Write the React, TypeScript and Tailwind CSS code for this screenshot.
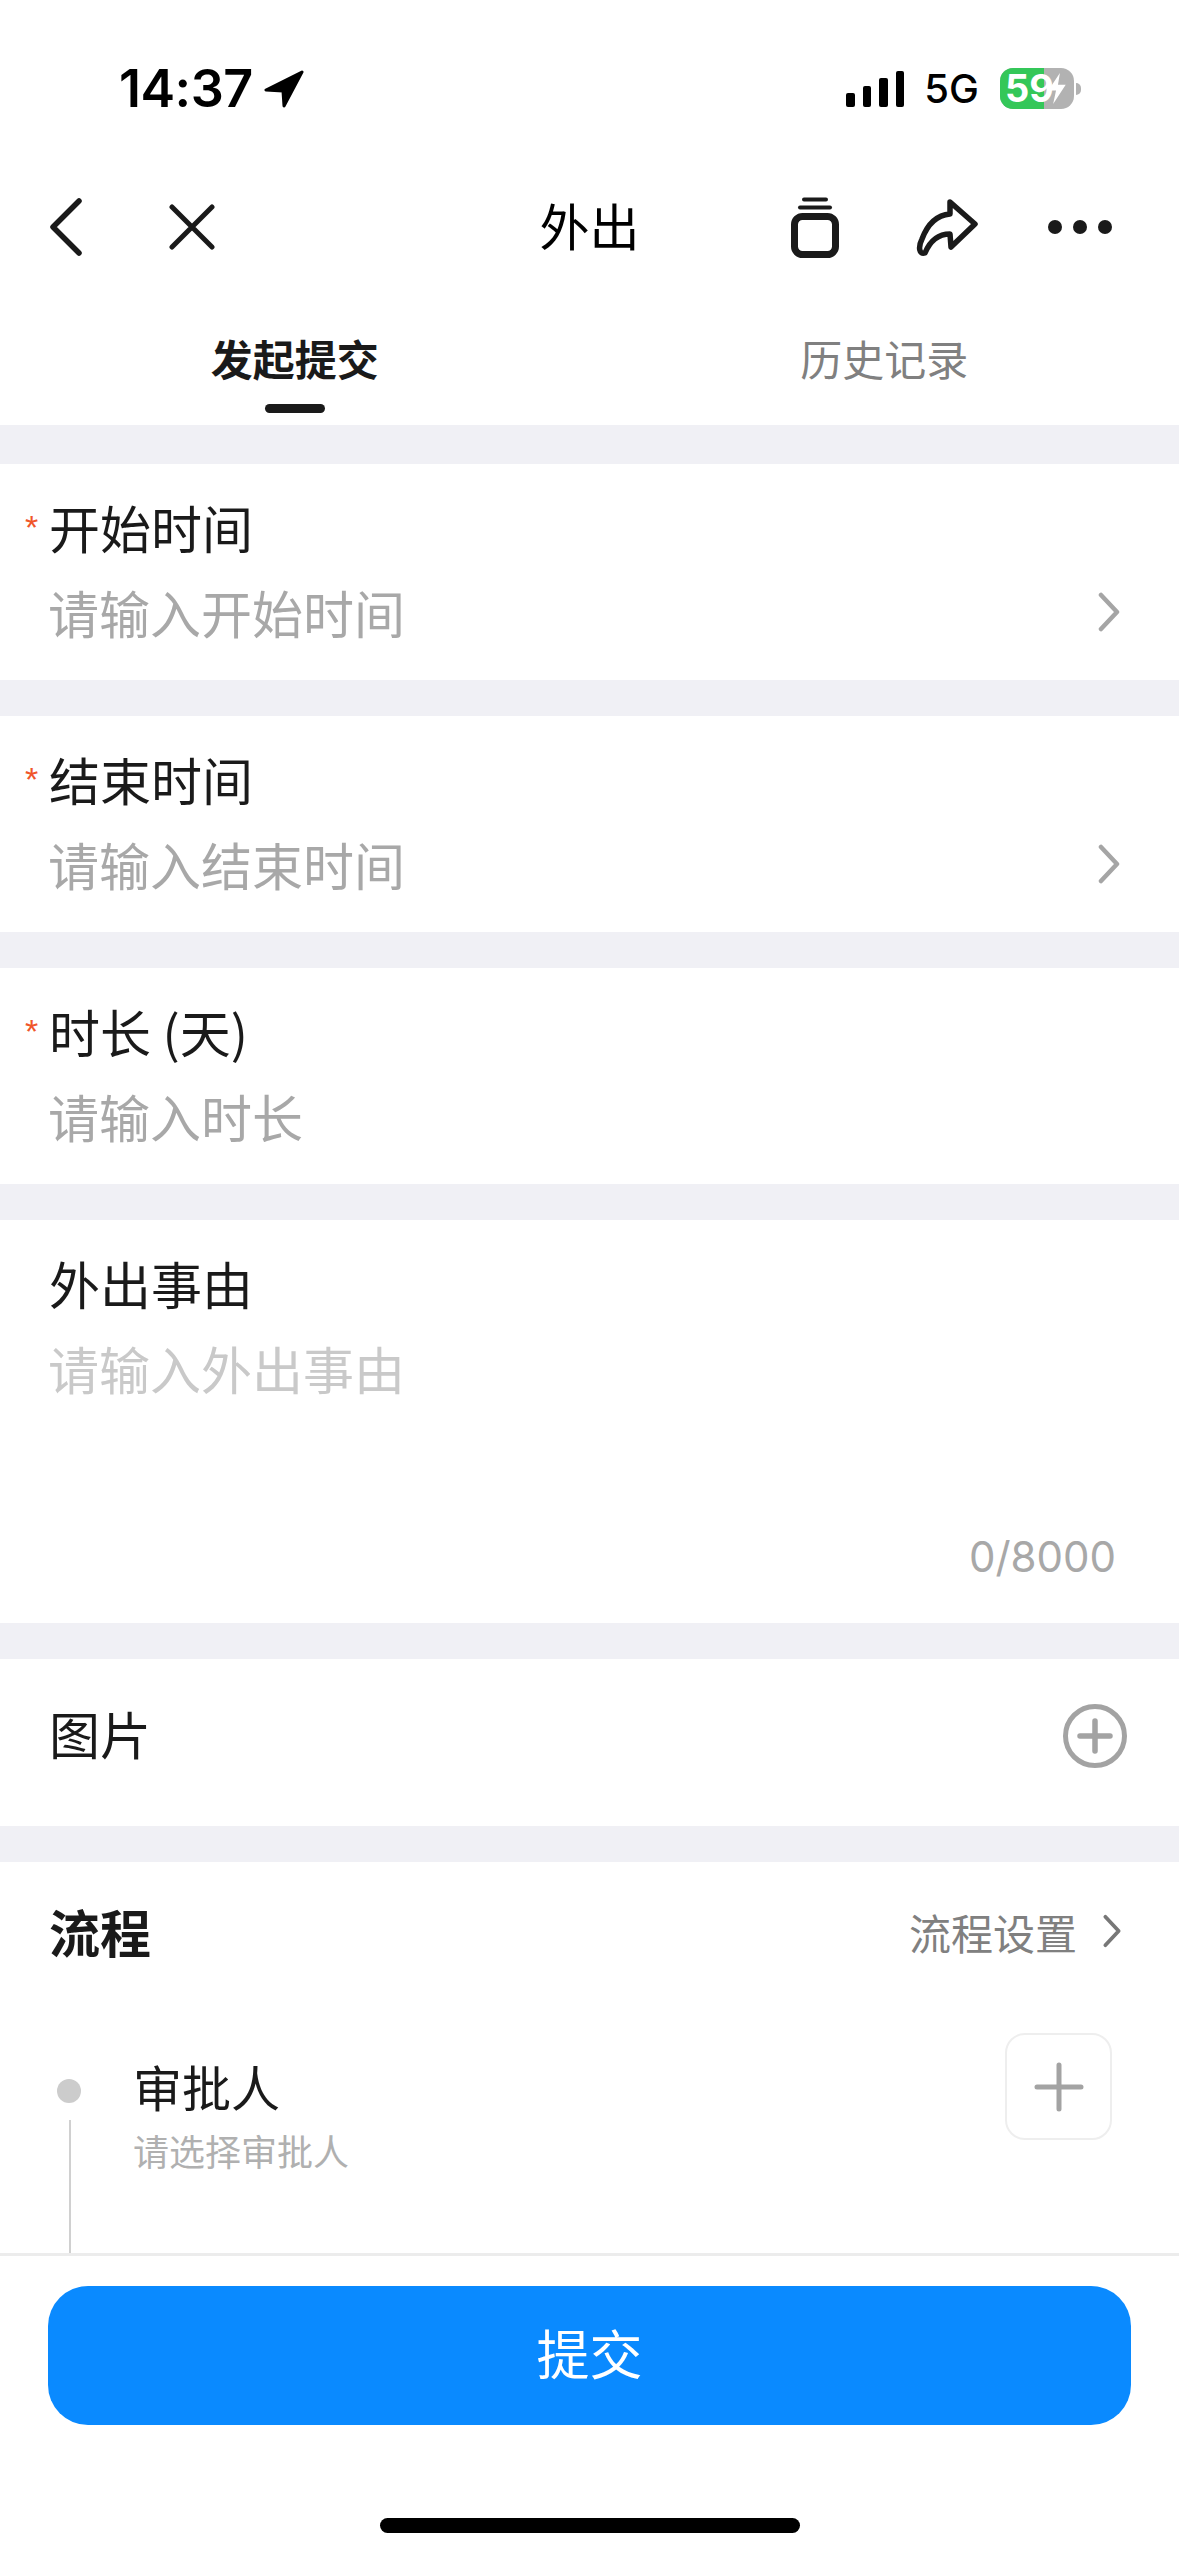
function Chevron({ className = "" }: { className?: string }) {
  return (
    <svg viewBox="0 0 24 40" className={className} fill="none" stroke="currentColor" strokeWidth="4.5" strokeLinecap="round" strokeLinejoin="round">
      <path d="M4 3 L20 20 L4 37" />
    </svg>
  );
}

function StatusBar() {
  return (
    <div className="flex h-[176px] items-center justify-between pl-[119px] pr-[98px] pt-[1px] text-black">
      <div className="flex items-center gap-[11px]">
        <span className="font-['Inter'] text-[52px] leading-none font-semibold tracking-[-0.5px]">14:37</span>
        <svg viewBox="0 0 40 38" className="h-[38px] w-[40px]" fill="currentColor" stroke="currentColor" strokeWidth="3" strokeLinejoin="round">
          <path d="M38 2 L2 20 L19 21 L20 36 Z" />
        </svg>
      </div>
      <div className="flex items-center">
        <div className="flex h-[36px] items-end gap-[8px]">
          <div className="h-[14px] w-[8.5px] rounded-[2px] bg-black" />
          <div className="h-[21px] w-[8.5px] rounded-[2px] bg-black" />
          <div className="h-[29px] w-[8.5px] rounded-[2px] bg-black" />
          <div className="h-[36px] w-[8.5px] rounded-[2px] bg-black" />
        </div>
        <span className="ml-[20px] font-['Inter'] text-[40px] leading-none font-medium">5G</span>
        <div className="relative ml-[21px] h-[41px] w-[74px] rounded-[13px] bg-[#b2b2b2]">
          <div className="h-full w-[44px] rounded-l-[13px] bg-[#34c759]" />
          <span className="absolute top-0 left-[5px] font-['Inter'] text-[38px] leading-[41px] font-bold text-white">59</span>
          <svg viewBox="0 0 20 32" className="absolute top-[5px] left-[47px] h-[31px] w-[20px]" fill="#ffffff">
            <path d="M13 0 L1 18 L9 18 L6 32 L19 12 L11 12 Z" />
          </svg>
        </div>
        <div className="ml-[2px] h-[12px] w-[5px] rounded-r-full bg-[#b2b2b2]" />
      </div>
    </div>
  );
}

function NavBar() {
  return (
    <div className="grid h-[102px] grid-cols-[1fr_auto_1fr] items-center text-[#1a1a1a]">
      <div className="flex items-center gap-[87px] pl-[50px]">
        <svg viewBox="0 0 32 58" className="h-[58px] w-[32px]" fill="none" stroke="currentColor" strokeWidth="5.5" strokeLinecap="round" strokeLinejoin="round">
          <path d="M29 3 L3 29 L29 55" />
        </svg>
        <svg viewBox="0 0 46 46" className="h-[46px] w-[46px]" fill="none" stroke="currentColor" strokeWidth="5" strokeLinecap="round">
          <path d="M3 3 L43 43 M43 3 L3 43" />
        </svg>
      </div>
      <div className="pb-[6px] text-[50px] leading-none text-black">外出</div>
      <div className="flex items-center justify-end pr-[67px]">
        <svg viewBox="0 0 48 61" className="h-[61px] w-[48px]" fill="none" stroke="currentColor" strokeLinecap="round">
          <rect x="3.5" y="19.5" width="41" height="38" rx="8" strokeWidth="7" />
          <path d="M13 2.5 H35" strokeWidth="4" />
          <path d="M9 10.5 H39" strokeWidth="4" />
        </svg>
        <svg viewBox="0 0 62 60" className="ml-[77px] h-[60px] w-[62px]" fill="none" stroke="currentColor" strokeWidth="5.5" strokeLinejoin="round">
          <path d="M34 5 L59 27 L35 50 L34 37 C22 37 14 44 9 56 C3 58 2 50 6 42 C12 26 22 18 34 17 Z" />
        </svg>
        <div className="ml-[70px] flex items-center gap-[11px]">
          <div className="h-[14px] w-[14px] rounded-full bg-current" />
          <div className="h-[14px] w-[14px] rounded-full bg-current" />
          <div className="h-[14px] w-[14px] rounded-full bg-current" />
        </div>
      </div>
    </div>
  );
}

function Tabs() {
  return (
    <div className="flex h-[147px] text-[42px] leading-[60px]">
      <div className="flex flex-1 flex-col items-center pt-[50px]">
        <span className="font-bold text-[#1a1a1a]">发起提交</span>
        <div className="mt-[16px] h-[9px] w-[60px] rounded-full bg-[#1a1a1a]" />
      </div>
      <div className="flex flex-1 flex-col items-center pt-[50px]">
        <span className="text-[#808080]">历史记录</span>
      </div>
    </div>
  );
}

function Label({ text, required }: { text: string; required?: boolean }) {
  return (
    <div className="relative text-[51px] leading-[70px] text-[#1a1a1a]">
      {required && (
        <span className="absolute top-0 -left-[24px] font-['Liberation_Sans'] text-[34px] leading-[70px] text-[#f0562a]">*</span>
      )}
      {text}
    </div>
  );
}

function Field({ label, placeholder, required, arrow }: { label: string; placeholder: string; required?: boolean; arrow?: boolean }) {
  return (
    <div className="mb-[36px] bg-white pt-[28px] pr-[58px] pb-[33px] pl-[49px]">
      <Label text={label} required={required} />
      <div className="mt-[15px] flex items-center justify-between text-[51px] leading-[70px] text-[#a8a8a8]">
        <span className="-ml-[1px]">{placeholder}</span>
        {arrow && <Chevron className="h-[40px] w-[24px] text-[#a5a5a5]" />}
      </div>
    </div>
  );
}

export default function App() {
  return (
    <div className="flex h-[2556px] w-[1179px] flex-col overflow-hidden bg-white font-['Noto_Sans_CJK_SC','Noto_Sans',sans-serif]">
      <StatusBar />
      <NavBar />
      <Tabs />

      <div className="min-h-0 flex-1 overflow-hidden bg-[#f0f0f5] pt-[39px]">
        <Field label="开始时间" placeholder="请输入开始时间" required arrow />
        <Field label="结束时间" placeholder="请输入结束时间" required arrow />
        <Field label="时长 (天)" placeholder="请输入时长" required />

        <div className="mb-[36px] h-[403px] bg-white pt-[28px] pr-[63px] pl-[49px]">
          <Label text="外出事由" />
          <div className="mt-[15px] -ml-[1px] text-[51px] leading-[70px] text-[#c9c9c9]">请输入外出事由</div>
          <div className="mt-[129px] text-right font-['Inter'] text-[42px] leading-[50px] text-[#a8a8a8]">0/8000</div>
        </div>

        <div className="mb-[36px] flex h-[167px] items-center justify-between bg-white pr-[52px] pb-[14px] pl-[49px]">
          <div className="mb-[6px]">
            <Label text="图片" />
          </div>
          <svg viewBox="0 0 64 64" className="h-[64px] w-[64px]" fill="none" stroke="#a3a3a3" strokeLinecap="round">
            <circle cx="32" cy="32" r="29.5" strokeWidth="5" />
            <path d="M17 32 H47 M32 17 V47" strokeWidth="5.5" />
          </svg>
        </div>

        <div className="h-full bg-white pt-[33px] pr-[57px] pl-[49px]">
          <div className="flex items-center justify-between">
            <div className="text-[51px] leading-[70px] font-bold text-[#1a1a1a]">流程</div>
            <div className="flex items-center gap-[25px] text-[42px] leading-[70px] text-[#808080]">
              <span className="pt-[2px]">流程设置</span>
              <Chevron className="h-[36px] w-[20px] text-[#777777]" />
            </div>
          </div>

          <div className="mt-[66px] flex">
            <div className="ml-[8px] flex w-[24px] flex-col items-center pt-[46px]">
              <div className="h-[24px] w-[24px] rounded-full bg-[#cccccc]" />
              <div className="mt-[17px] ml-[2px] h-[200px] w-[2px] bg-[#d0d0d0]" />
            </div>
            <div className="ml-[52px] flex-1 pt-[21px]">
              <div className="text-[49px] leading-[64px] text-[#1a1a1a]">审批人</div>
              <div className="mt-[7px] text-[36px] leading-[50px] text-[#b0b0b0]">请选择审批人</div>
            </div>
            <div className="mr-[10px] flex h-[107px] w-[107px] items-center justify-center rounded-[20px] border-2 border-[#eeeeee]">
              <svg viewBox="0 0 50 50" className="h-[50px] w-[50px]" fill="none" stroke="#a3a3a3" strokeWidth="5" strokeLinecap="round">
                <path d="M3 25 H47 M25 3 V47" />
              </svg>
            </div>
          </div>
        </div>
      </div>

      <div className="h-[303px] border-t-[3px] border-[#ececec] bg-white">
        <div className="mx-[48px] mt-[30px] flex h-[139px] items-center justify-center rounded-[40px] bg-[#0a8aff] pb-[5px] text-[53px] text-white">提交</div>
        <div className="mx-auto mt-[93px] h-[15px] w-[420px] rounded-full bg-black" />
      </div>
    </div>
  );
}
